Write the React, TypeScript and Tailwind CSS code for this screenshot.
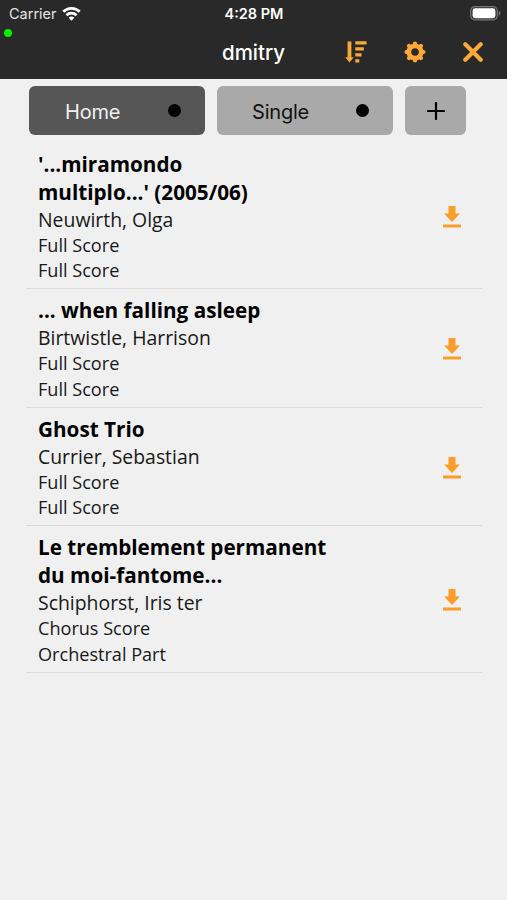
const scores = [
  {
    title: ["'...miramondo", "multiplo...' (2005/06)"],
    composer: 'Neuwirth, Olga',
    parts: ['Full Score', 'Full Score']
  },
  {
    title: ['... when falling asleep'],
    composer: 'Birtwistle, Harrison',
    parts: ['Full Score', 'Full Score']
  },
  {
    title: ['Ghost Trio'],
    composer: 'Currier, Sebastian',
    parts: ['Full Score', 'Full Score']
  },
  {
    title: ['Le tremblement permanent', 'du moi-fantome...'],
    composer: 'Schiphorst, Iris ter',
    parts: ['Chorus Score', 'Orchestral Part']
  }
];

function WifiIcon() {
  return (
    <svg width="19" height="14" viewBox="0 0 20 15" fill="none" stroke="#fff" strokeWidth="3">
      <path d="M1.2 5.2a12.4 12.4 0 0 1 17.6 0" />
      <path d="M4.6 8.8a7.8 7.8 0 0 1 10.8 0" />
      <path d="M10 14.8 6.9 11.6a4.5 4.5 0 0 1 6.2 0Z" fill="#fff" stroke="none" />
    </svg>
  );
}

function BatteryIcon() {
  return (
    <svg width="31" height="15" viewBox="0 0 31 15">
      <rect x="0.7" y="0.7" width="26.6" height="13.1" rx="4" fill="#303030" stroke="#777" strokeWidth="1.2" />
      <rect x="2.6" y="2.3" width="22.8" height="9.9" rx="2.4" fill="#fff" />
      <path d="M28.8 5v4.6c1-.4 1.6-1.2 1.6-2.3S29.8 5.4 28.8 5Z" fill="#777" />
    </svg>
  );
}

function SortIcon() {
  return (
    <svg width="22" height="22" viewBox="0 0 22 22" fill="#fba83a">
      <path d="M2.6.5h3.8v15.7h2.3l-4.2 5.3-4.2-5.3h2.3Z" />
      <path d="M10.3.3h11.2v3.1H10.3zM10.3 6.3h8.5v3.1h-8.5zM10.3 12.3h6.2v3.1h-6.2zM10.3 18.3h4v3.1h-4z" />
    </svg>
  );
}

function GearIcon() {
  return (
    <svg width="22" height="22" viewBox="0 0 22 22" fill="none" stroke="#fba83a">
      <circle cx="11" cy="11" r="6.2" strokeWidth="4.8" />
      <g strokeWidth="4.2" strokeLinecap="round">
        <path d="M11 2.5v1M11 18.5v1M2.5 11h1M18.5 11h1" />
        <path d="m5 5 .6.6M16.4 16.4l.6.6M17 5l-.6.6M5.6 16.4 5 17" />
      </g>
    </svg>
  );
}

function CloseIcon() {
  return (
    <svg width="20" height="20" viewBox="0 0 20 20" stroke="#fba83a" strokeWidth="4.2" strokeLinecap="round">
      <path d="m2.3 2.3 15.4 15.4M17.7 2.3 2.3 17.7" />
    </svg>
  );
}

function DownloadIcon() {
  return (
    <svg width="18" height="22" viewBox="0 0 18 22" fill="#fb9d28">
      <path d="M5.5 0h7v7.500H17L9 16 1 7.500h4.500zM0 18.500h18v3H0z" />
    </svg>
  );
}

function Header() {
  return (
    <header className="h-[79px] bg-[#292929] font-['Inter',sans-serif] text-white">
      <div className="grid h-[27px] grid-cols-3 items-center pr-[6px] pl-[9px]">
        <div className="flex items-center gap-[5px] text-[#e4e4e4]">
          <span className="text-[14.5px]">Carrier</span>
          <WifiIcon />
        </div>
        <span className="-ml-[2px] text-center text-[14.5px] font-semibold">4:28 PM</span>
        <div className="flex justify-end">
          <BatteryIcon />
        </div>
      </div>
      <div className="relative h-[52px]">
        <span className="absolute top-[2px] left-1 size-2 rounded-full bg-[#00f000]" />
        <div className="grid h-[50px] grid-cols-[1fr_auto_1fr] items-center px-6">
          <h1 className="col-start-2 pt-[2px] text-[20.5px] font-medium">dmitry</h1>
          <div className="flex items-center justify-end">
            <div className="mr-[37px]">
              <SortIcon />
            </div>
            <div className="mr-[37px]">
              <GearIcon />
            </div>
            <CloseIcon />
          </div>
        </div>
      </div>
    </header>
  );
}

function Tabs() {
  return (
    <nav className="flex gap-3 pt-[7px] pl-[29px] font-['Inter',sans-serif] text-[20px] tracking-[-0.2px]">
      <div className="flex h-[49px] w-[176px] items-center justify-between rounded-md bg-[#565656] pr-6 pl-9 text-[#f0f0f0]">
        <span className="pt-[2px]">Home</span>
        <span className="size-[13px] rounded-full bg-black" />
      </div>
      <div className="flex h-[49px] w-[176px] items-center justify-between rounded-md bg-[#a9a9a9] pr-6 pl-[35px] text-[#111]">
        <span className="pt-[2px]">Single</span>
        <span className="size-[13px] rounded-full bg-black" />
      </div>
      <div className="flex h-[49px] w-[61px] items-center justify-center rounded-md bg-[#a9a9a9]">
        <svg width="18" height="18" viewBox="0 0 18 18" stroke="#000" strokeWidth="2.2" strokeLinecap="round">
          <path d="M9 1v16M1 9h16" />
        </svg>
      </div>
    </nav>
  );
}

export default function App() {
  return (
    <div className="h-[900px] w-[507px] bg-[#f0f0f0]">
      <Header />
      <Tabs />
      <main className="mt-[7.5px] pr-[25px] pl-[26px] font-['Open_Sans','Noto_Sans',sans-serif] text-[#181818]">
        {scores.map((score) => (
          <article
            key={score.composer}
            className="flex items-center justify-between border-b border-[#dcdcdc] pt-[7px] pr-[21px] pb-[4.5px] pl-3"
          >
            <div>
              <h2 className="text-[20.7px] leading-[28px] font-bold text-black">
                {score.title.map((line) => (
                  <span key={line} className="block">
                    {line}
                  </span>
                ))}
              </h2>
              <p className="text-[19.4px] leading-[27px]">{score.composer}</p>
              {score.parts.map((part, i) => (
                <p key={i} className="text-[18.1px] leading-[25.5px]">
                  {part}
                </p>
              ))}
            </div>
            <DownloadIcon />
          </article>
        ))}
      </main>
    </div>
  );
}
